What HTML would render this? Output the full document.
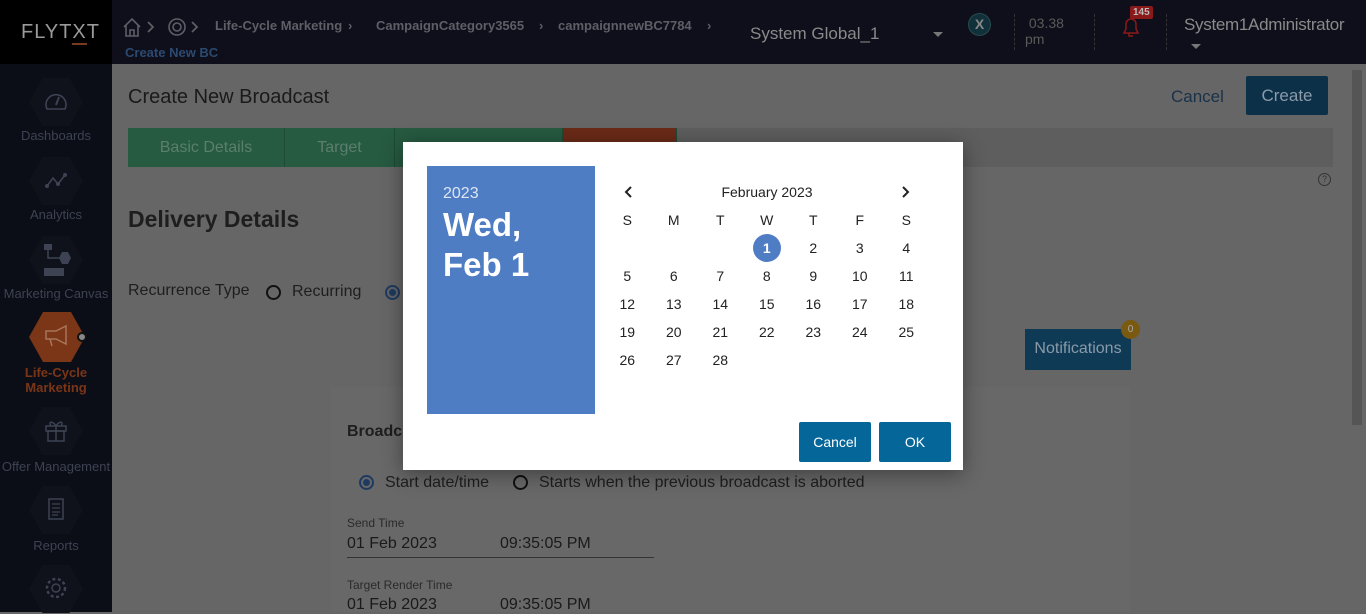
<!DOCTYPE html>
<html><head><meta charset="utf-8"><style>
*{margin:0;padding:0;box-sizing:border-box}
body{width:1366px;height:612px;overflow:hidden;background:#666;font-family:"Liberation Sans",sans-serif;position:relative}
.abs{position:absolute}
.hdr{left:0;top:0;width:1366px;height:64px;background:#0e0f1a}
.logo{left:0;top:0;width:112px;height:64px;background:#000;color:#9a9a9a;font-size:20px;letter-spacing:1px;padding:21px 0 0 21px}
.side{left:0;top:64px;width:112px;height:548px;background:#0b0d17}
.hex{position:absolute;left:29px;width:54px;height:48px;background:#0f111b;clip-path:polygon(25% 0,75% 0,100% 50%,75% 100%,25% 100%,0 50%)}
.ic{position:absolute;left:42px}
.sl{position:absolute;left:0;width:112px;text-align:center;color:#3d4352;font-size:13px}
.bc{color:#5d5f66;font-size:13px;font-weight:bold;top:18px;white-space:nowrap}
.tab{top:128px;height:39px;color:#5a7f6d;font-size:16px;text-align:center;line-height:39px;background:#265a41;border-right:1px solid #1e4a35}
.cal td{width:46.5px;height:28px;text-align:center;font-size:14px;color:#222}
</style></head><body>
<div class="abs hdr"></div>
<div class="abs logo">FLYT<span style="border-bottom:2px solid #7a3a20">X</span>T</div>
<svg class="abs" style="left:121px;top:16px" width="80" height="22"><path d="M3 11 L11 3 L19 11 M5 9 V20 H17 V9 M9 20 V14 H13 V20" stroke="#5d5f66" stroke-width="1.6" fill="none"/><path d="M27 6 L32 11 L27 16" stroke="#5d5f66" stroke-width="1.8" fill="none"/><circle cx="56" cy="11" r="8" stroke="#5d5f66" stroke-width="1.6" fill="none"/><circle cx="56" cy="11" r="4" stroke="#5d5f66" stroke-width="1.6" fill="none"/><path d="M71 6 L76 11 L71 16" stroke="#5d5f66" stroke-width="1.8" fill="none"/></svg>
<div class="abs bc" style="left:215px">Life-Cycle Marketing</div>
<div class="abs bc" style="left:348px">›</div>
<div class="abs bc" style="left:376px">CampaignCategory3565</div>
<div class="abs bc" style="left:539px">›</div>
<div class="abs bc" style="left:558px">campaignnewBC7784</div>
<div class="abs bc" style="left:707px">›</div>
<div class="abs" style="left:125px;top:45px;color:#2c4a70;font-size:13px;font-weight:bold">Create New BC</div>
<div class="abs" style="left:750px;top:24px;color:#8a8a8a;font-size:17px">System Global_1</div>
<div class="abs" style="left:933px;top:32px;border:5px solid transparent;border-top-color:#777;border-bottom:0"></div>
<div class="abs" style="left:968px;top:13px;width:23px;height:23px;border-radius:50%;background:#10303a;border:1px solid #2a4a50;color:#888;font-weight:bold;font-size:14px;text-align:center;line-height:21px">X</div>
<div class="abs" style="left:1014px;top:14px;height:36px;border-left:1px dashed #333"></div>
<div class="abs" style="left:1025px;top:15px;color:#5a5a5a;font-size:14px;line-height:16px">&nbsp;03.38<br>pm</div>
<div class="abs" style="left:1094px;top:14px;height:36px;border-left:1px dashed #333"></div>
<svg class="abs" style="left:1120px;top:15px" width="22" height="22"><path d="M4 18 H18 L16 14 V9 A5 5 0 0 0 6 9 V14 Z M9 18 V21 H13" stroke="#8a1a1a" stroke-width="1.5" fill="none"/></svg>
<div class="abs" style="left:1130px;top:6px;background:#8a1a1a;color:#bbb;font-size:10px;font-weight:bold;padding:1px 3px;border-radius:2px">145</div>
<div class="abs" style="left:1166px;top:14px;height:36px;border-left:1px dashed #333"></div>
<div class="abs" style="left:1184px;top:15px;color:#8a8a8a;font-size:17px;letter-spacing:-0.3px">System1Administrator</div>
<div class="abs" style="left:1191px;top:44px;border:5px solid transparent;border-top-color:#777;border-bottom:0"></div>
<div class="abs side"></div>
<div class="hex" style="top:78px"></div>
<svg class="ic" style="top:89px" width="28" height="26"><path d="M5 20 A10 10 0 1 1 23 20 Z" stroke="#3d4352" stroke-width="1.6" fill="none"/><path d="M14 16 L17 8" stroke="#3d4352" stroke-width="2"/></svg>
<div class="sl" style="top:128px">Dashboards</div>
<div class="hex" style="top:157px"></div>
<svg class="ic" style="top:168px" width="28" height="26"><path d="M5 18 L11 10 L16 16 L23 7" stroke="#3d4352" stroke-width="1.6" fill="none"/><circle cx="5" cy="18" r="2" fill="#3d4352"/><circle cx="16" cy="16" r="2" fill="#3d4352"/><circle cx="23" cy="7" r="2" fill="#3d4352"/></svg>
<div class="sl" style="top:207px">Analytics</div>
<div class="hex" style="top:236px"></div>
<svg class="ic" style="top:240px" width="30" height="40"><rect x="2" y="4" width="8" height="6" fill="#3d4352"/><path d="M6 10 V18 H18" stroke="#3d4352" stroke-width="1.5" fill="none"/><polygon points="20,12 26,12 29,18 26,24 20,24 17,18" fill="#3d4352"/><rect x="2" y="28" width="20" height="8" fill="#3d4352"/></svg>
<div class="sl" style="top:286px">Marketing Canvas</div>
<div class="hex" style="top:312px;background:#7a3616;width:56px;height:50px"></div>
<svg class="abs" style="left:42px;top:324px" width="30" height="26"><path d="M4 7 H14 L24 2 V20 L14 15 H4 Z M8 15 L10 22" stroke="#a8755a" stroke-width="1.5" fill="none"/></svg>
<div class="abs" style="left:77px;top:332px;width:10px;height:10px;border-radius:50%;background:#888;border:2px solid #111"></div>
<div class="sl" style="top:365px;color:#7a3616;font-weight:bold;line-height:15px">Life-Cycle<br>Marketing</div>
<div class="hex" style="top:407px"></div>
<svg class="ic" style="top:418px" width="28" height="26"><rect x="4" y="8" width="20" height="5" stroke="#3d4352" stroke-width="1.5" fill="none"/><rect x="6" y="13" width="16" height="10" stroke="#3d4352" stroke-width="1.5" fill="none"/><path d="M14 8 V23 M14 8 C10 2 6 4 9 8 M14 8 C18 2 22 4 19 8" stroke="#3d4352" stroke-width="1.5" fill="none"/></svg>
<div class="sl" style="top:459px">Offer Management</div>
<div class="hex" style="top:486px"></div>
<svg class="ic" style="top:497px" width="28" height="26"><rect x="7" y="2" width="14" height="20" stroke="#3d4352" stroke-width="1.5" fill="none"/><path d="M10 7 H18 M10 11 H18 M10 15 H18 M10 18 H16" stroke="#3d4352" stroke-width="1.2"/></svg>
<div class="sl" style="top:538px">Reports</div>
<div class="hex" style="top:565px"></div>
<svg class="ic" style="top:575px" width="28" height="26"><circle cx="14" cy="13" r="4" stroke="#3d4352" stroke-width="1.5" fill="none"/><circle cx="14" cy="13" r="9" stroke="#3d4352" stroke-width="2.5" stroke-dasharray="3 2.5" fill="none"/></svg>
<div class="abs" style="left:1352px;top:70px;width:10px;height:355px;background:#555"></div>
<div class="abs" style="left:128px;top:86px;font-size:20px;color:#1a1a1a">Create New Broadcast</div>
<div class="abs" style="left:1171px;top:87px;font-size:17px;color:#1a3148">Cancel</div>
<div class="abs" style="left:1246px;top:76px;width:82px;height:39px;background:#0d3049;border-radius:2px;color:#8a9aa8;font-size:17px;text-align:center;line-height:39px">Create</div>
<div class="abs" style="left:128px;top:128px;width:1205px;height:39px;background:#5e5e5e"></div>
<div class="abs tab" style="left:128px;width:157px">Basic Details</div>
<div class="abs tab" style="left:285px;width:110px">Target</div>
<div class="abs tab" style="left:395px;width:168px"></div>
<div class="abs tab" style="left:563px;width:114px;background:#6b2a17"></div>
<div class="abs" style="left:1318px;top:173px;width:13px;height:13px;border:1px solid #333;border-radius:50%;font-size:9px;color:#333;text-align:center;line-height:11px">?</div>
<div class="abs" style="left:128px;top:206px;font-size:23px;font-weight:bold;color:#1e1e1e">Delivery Details</div>
<div class="abs" style="left:128px;top:282px;font-size:16px;color:#1e1e1e">Recurrence Type</div>
<div class="abs" style="left:266px;top:285px;width:15px;height:15px;border:2px solid #111;border-radius:50%"></div>
<div class="abs" style="left:292px;top:283px;font-size:16px;color:#1e1e1e">Recurring</div>
<div class="abs" style="left:385px;top:285px;width:15px;height:15px;border:2px solid #1e3a60;border-radius:50%;background:radial-gradient(#1e3a60 3px,transparent 4px)"></div>
<div class="abs" style="left:1025px;top:329px;width:106px;height:41px;background:#0e3a55;color:#8a9aa8;font-size:16px;text-align:center;line-height:40px">Notifications</div>
<div class="abs" style="left:1121px;top:320px;width:19px;height:19px;border-radius:50%;background:#7a5a10;color:#aaa;font-size:10px;text-align:center;line-height:19px">0</div>
<div class="abs" style="left:331px;top:387px;width:799px;height:225px;background:#686868"></div>
<div class="abs" style="left:347px;top:423px;font-size:16px;font-weight:bold;color:#1e1e1e">Broadc</div>
<div class="abs" style="left:359px;top:475px;width:15px;height:15px;border:2px solid #1e3a60;border-radius:50%;background:radial-gradient(#1e3a60 3px,transparent 4px)"></div>
<div class="abs" style="left:385px;top:474px;font-size:16px;color:#1e1e1e">Start date/time</div>
<div class="abs" style="left:513px;top:475px;width:15px;height:15px;border:2px solid #111;border-radius:50%"></div>
<div class="abs" style="left:539px;top:474px;font-size:16px;color:#1e1e1e">Starts when the previous broadcast is aborted</div>
<div class="abs" style="left:347px;top:516px;font-size:12px;color:#2a2a2a">Send Time</div>
<div class="abs" style="left:347px;top:535px;font-size:16px;color:#1a1a1a">01 Feb 2023</div>
<div class="abs" style="left:500px;top:535px;font-size:16px;color:#1a1a1a">09:35:05 PM</div>
<div class="abs" style="left:347px;top:557px;width:307px;border-top:1px solid #333"></div>
<div class="abs" style="left:347px;top:578px;font-size:12px;color:#2a2a2a">Target Render Time</div>
<div class="abs" style="left:347px;top:596px;font-size:16px;color:#1a1a1a">01 Feb 2023</div>
<div class="abs" style="left:500px;top:596px;font-size:16px;color:#1a1a1a">09:35:05 PM</div>

<div class="abs" style="left:403px;top:142px;width:560px;height:328px;background:#fff;box-shadow:0 4px 20px rgba(0,0,0,.4)"></div>
<div class="abs" style="left:427px;top:166px;width:168px;height:248px;background:#4f7dc4;color:#fff;padding:19px 16px">
<div style="font-size:16px;color:#dce6f5">2023</div>
<div style="font-size:33px;font-weight:bold;line-height:40px;margin-top:2px">Wed,<br>Feb 1</div></div>
<svg class="abs" style="left:620px;top:184px" width="300" height="16"><path d="M11 3 L6 8 L11 13" stroke="#222" stroke-width="2" fill="none"/><path d="M283 3 L288 8 L283 13" stroke="#222" stroke-width="2" fill="none"/></svg>
<div class="abs" style="left:604px;top:184px;width:326px;text-align:center;font-size:14px;color:#222">February 2023</div>
<table class="abs cal" style="left:604px;top:206px;border-collapse:collapse">
<tr><td>S</td><td>M</td><td>T</td><td>W</td><td>T</td><td>F</td><td>S</td></tr>
<tr><td></td><td></td><td></td><td><span style="display:inline-block;width:28px;height:28px;border-radius:50%;background:#4f7dc4;color:#fff;line-height:28px;font-weight:bold">1</span></td><td>2</td><td>3</td><td>4</td></tr>
<tr><td>5</td><td>6</td><td>7</td><td>8</td><td>9</td><td>10</td><td>11</td></tr>
<tr><td>12</td><td>13</td><td>14</td><td>15</td><td>16</td><td>17</td><td>18</td></tr>
<tr><td>19</td><td>20</td><td>21</td><td>22</td><td>23</td><td>24</td><td>25</td></tr>
<tr><td>26</td><td>27</td><td>28</td><td></td><td></td><td></td><td></td></tr>
</table>
<div class="abs" style="left:799px;top:422px;width:72px;height:40px;background:#05669a;border-radius:2px;color:#fff;font-size:14px;text-align:center;line-height:40px">Cancel</div>
<div class="abs" style="left:879px;top:422px;width:72px;height:40px;background:#05669a;border-radius:2px;color:#fff;font-size:14px;text-align:center;line-height:40px">OK</div>
</body></html>
